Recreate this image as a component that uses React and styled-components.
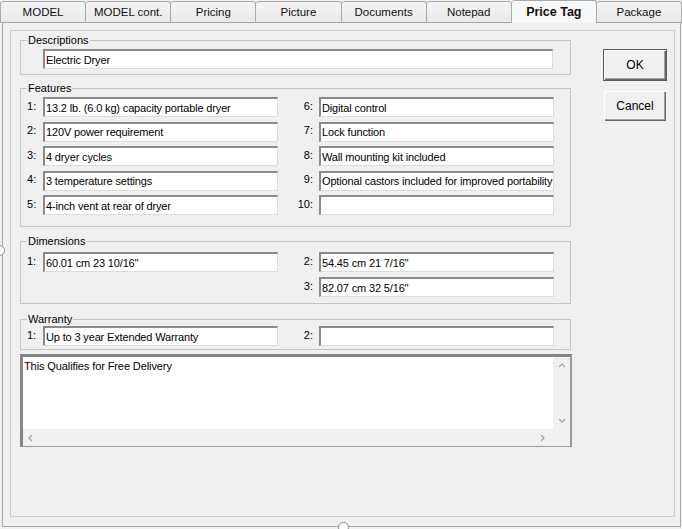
import React from 'react';
import styled, { createGlobalStyle } from 'styled-components';

const GlobalStyle = createGlobalStyle`
  html, body {
    margin: 0;
    padding: 0;
    background: #f0f0f0;
  }
  body {
    font-family: "Liberation Sans", Arial, sans-serif;
    font-size: 11px;
    color: #000;
  }
`;

const Window = styled.div`
  position: relative;
  width: 682px;
  height: 529px;
  overflow: hidden;
  display: flex;
  flex-direction: column;
  background: #f0f0f0;
`;

const TabBar = styled.div`
  display: flex;
  height: 21px;
  position: relative;
  z-index: 2;
`;

const Tab = styled.div`
  flex: 1;
  display: flex;
  align-items: center;
  justify-content: center;
  margin-top: ${(p) => (p.$active ? '0' : '1px')};
  height: ${(p) => (p.$active ? '22px' : '20px')};
  background: ${(p) => (p.$active ? '#f7f7f7' : 'linear-gradient(#f4f4f4, #e9e9e9)')};
  border: 1px solid #a9a9a9;
  border-bottom: ${(p) => (p.$active ? 'none' : '1px solid #a9a9a9')};
  border-left: ${(p) => (p.$first ? '1px solid #a9a9a9' : 'none')};
  border-radius: 3px 3px 0 0;
  font-size: ${(p) => (p.$active ? '12.5px' : '11.5px')};
  font-weight: ${(p) => (p.$active ? 'bold' : 'normal')};
  color: #111;
  white-space: nowrap;
`;

const TabBody = styled.div`
  flex: 1;
  margin: 0 1px 2px 2px;
  border: 1px solid #a9a9a9;
  padding: 8px 5px 9px 7px;
  display: flex;
`;

const Page = styled.div`
  flex: 1;
  border: 1px solid #cdcdcd;
  display: flex;
  gap: 31px;
  padding: 2.5px 7px 0 9px;
`;

const MainColumn = styled.div`
  width: 552px;
  display: flex;
  flex-direction: column;
`;

const Group = styled.fieldset`
  margin: ${(p) => p.$mt || 0}px 1px 0 0;
  padding: ${(p) => p.$pt || 0}px 16px ${(p) => p.$pb || 0}px 6px;
  border: 1px solid #c6c6c6;
  min-width: 0;
`;

const Legend = styled.legend`
  padding: 0 1px;
  font-size: 11px;
  line-height: 13px;
  color: #000;
`;

const FieldGrid = styled.div`
  display: grid;
  grid-template-columns: 16px 235px 41px 235px;
  grid-auto-rows: 20px;
  row-gap: ${(p) => p.$gap}px;
  align-items: center;
`;

const Num = styled.span`
  text-align: ${(p) => (p.$right ? 'right' : 'left')};
  padding-right: ${(p) => (p.$right ? '6px' : '0')};
  padding-bottom: 3px;
  grid-column: ${(p) => p.$col};
`;

const Field = styled.div`
  box-sizing: border-box;
  height: 20px;
  width: ${(p) => (p.$wide ? '510px' : 'auto')};
  margin-left: ${(p) => (p.$wide ? '16px' : '0')};
  grid-column: ${(p) => p.$col};
  background: #fff;
  border-top: 2px solid #8a8a8a;
  border-left: 2px solid #8a8a8a;
  border-right: 1px solid #dcdcdc;
  border-bottom: 1px solid #dcdcdc;
  padding: 0 1px;
  display: flex;
  align-items: center;
  white-space: nowrap;
  overflow: hidden;
  letter-spacing: -0.15px;
`;

const Memo = styled.div`
  margin-top: 4px;
  height: 93px;
  box-sizing: border-box;
  border-top: 3px solid #858585;
  border-left: 3px solid #858585;
  border-right: 2px solid #9a9a9a;
  border-bottom: 1px solid #9a9a9a;
  display: grid;
  grid-template-columns: 1fr 17px;
  grid-template-rows: 1fr 17px;
`;

const MemoText = styled.div`
  background: #fff;
  padding: 3px 1px;
  line-height: 13px;
  letter-spacing: -0.1px;
`;

const ScrollTrack = styled.div`
  background: #f0f0f0;
  display: flex;
  flex-direction: ${(p) => (p.$vertical ? 'column' : 'row')};
  justify-content: space-between;
  align-items: center;
  padding: ${(p) => (p.$vertical ? '5px 0' : '0 7px 0 4px')};
`;

const Corner = styled.div`
  background: #f0f0f0;
`;

const ButtonColumn = styled.div`
  display: flex;
  flex-direction: column;
  gap: 9px;
  margin-top: 15.5px;
`;

const Button = styled.div`
  box-sizing: border-box;
  width: 64px;
  height: 32px;
  display: flex;
  align-items: center;
  justify-content: center;
  font-size: 12px;
  background: #f0f0f0;
  border: 1px solid ${(p) => (p.$default ? '#5a5a5a' : '#f0f0f0')};
  box-shadow: inset 1px 1px 0 #fff, inset -1px -1px 0 #696969, inset -2px -2px 0 #a0a0a0;
`;

const Grip = styled.div`
  position: absolute;
  width: 9px;
  height: 9px;
  border-radius: 50%;
  border: 1px solid #8a8a8a;
  background: #fff;
  left: ${(p) => p.$x}px;
  top: ${(p) => p.$y}px;
`;

const Chevron = ({ dir }) => {
  const paths = {
    up: 'M1 5 L4 2 L7 5',
    down: 'M1 2 L4 5 L7 2',
    left: 'M5 1 L2 4 L5 7',
    right: 'M2 1 L5 4 L2 7',
  };
  const vertical = dir === 'up' || dir === 'down';
  return (
    <svg width={vertical ? 8 : 7} height={vertical ? 7 : 8} viewBox={vertical ? '0 0 8 7' : '0 0 7 8'}>
      <path d={paths[dir]} fill="none" stroke="#a8a8a8" strokeWidth="1.3" />
    </svg>
  );
};

const tabs = ['MODEL', 'MODEL cont.', 'Pricing', 'Picture', 'Documents', 'Notepad', 'Price Tag', 'Package'];

const featuresLeft = [
  '13.2 lb. (6.0 kg) capacity portable dryer',
  '120V power requirement',
  '4 dryer cycles',
  '3 temperature settings',
  '4-inch vent at rear of dryer',
];

const featuresRight = [
  'Digital control',
  'Lock function',
  'Wall mounting kit included',
  'Optional castors included for improved portability',
  '',
];

export default function App() {
  return (
    <Window>
      <GlobalStyle />
      <TabBar>
        {tabs.map((t, i) => (
          <Tab key={t} $first={i === 0} $active={t === 'Price Tag'}>
            {t}
          </Tab>
        ))}
      </TabBar>
      <TabBody>
        <Page>
          <MainColumn>
            <Group $pt={2.5} $pb={5}>
              <Legend>Descriptions</Legend>
              <Field $wide>Electric Dryer</Field>
            </Group>

            <Group $mt={7} $pt={2} $pb={11}>
              <Legend>Features</Legend>
              <FieldGrid $gap={4.5}>
                {featuresLeft.map((f, i) => (
                  <React.Fragment key={i}>
                    <Num $col={1}>{i + 1}:</Num>
                    <Field $col={2}>{f}</Field>
                    <Num $col={3} $right>{i + 6}:</Num>
                    <Field $col={4}>{featuresRight[i]}</Field>
                  </React.Fragment>
                ))}
              </FieldGrid>
            </Group>

            <Group $mt={8} $pt={4} $pb={6}>
              <Legend>Dimensions</Legend>
              <FieldGrid $gap={5}>
                <Num $col={1}>1:</Num>
                <Field $col={2}>60.01 cm 23 10/16''</Field>
                <Num $col={3} $right>2:</Num>
                <Field $col={4}>54.45 cm 21 7/16''</Field>
                <Num $col={3} $right>3:</Num>
                <Field $col={4}>82.07 cm 32 5/16''</Field>
              </FieldGrid>
            </Group>

            <Group $mt={8.5} $pt={0.5} $pb={3}>
              <Legend>Warranty</Legend>
              <FieldGrid $gap={0}>
                <Num $col={1}>1:</Num>
                <Field $col={2}>Up to 3 year Extended Warranty</Field>
                <Num $col={3} $right>2:</Num>
                <Field $col={4}></Field>
              </FieldGrid>
            </Group>

            <Memo>
              <MemoText>This Qualifies for Free Delivery</MemoText>
              <ScrollTrack $vertical>
                <Chevron dir="up" />
                <Chevron dir="down" />
              </ScrollTrack>
              <ScrollTrack>
                <Chevron dir="left" />
                <Chevron dir="right" />
              </ScrollTrack>
              <Corner />
            </Memo>
          </MainColumn>

          <ButtonColumn>
            <Button $default>OK</Button>
            <Button>Cancel</Button>
          </ButtonColumn>
        </Page>
      </TabBody>
      <Grip $x={-6} $y={245} />
      <Grip $x={338} $y={522} />
    </Window>
  );
}
